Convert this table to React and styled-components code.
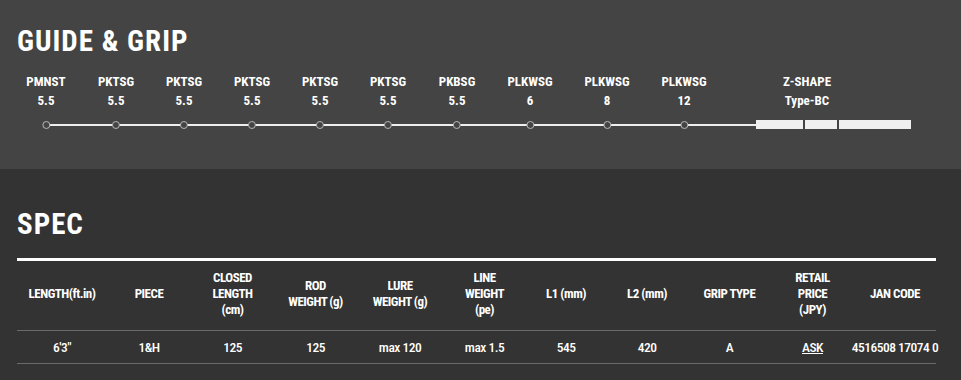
import styled, { createGlobalStyle } from 'styled-components';

const guides = [
  { name: 'PMNST', size: '5.5', x: 46 },
  { name: 'PKTSG', size: '5.5', x: 116 },
  { name: 'PKTSG', size: '5.5', x: 184 },
  { name: 'PKTSG', size: '5.5', x: 252 },
  { name: 'PKTSG', size: '5.5', x: 320 },
  { name: 'PKTSG', size: '5.5', x: 388 },
  { name: 'PKBSG', size: '5.5', x: 457 },
  { name: 'PLKWSG', size: '6', x: 530 },
  { name: 'PLKWSG', size: '8', x: 607 },
  { name: 'PLKWSG', size: '12', x: 684 },
];

const columns = [
  { head: ['LENGTH(ft.in)'], value: '6\'3"', width: 90 },
  { head: ['PIECE'], value: '1&H', width: 84 },
  { head: ['CLOSED', 'LENGTH', '(cm)'], value: '125', width: 83 },
  { head: ['ROD', 'WEIGHT (g)'], value: '125', width: 83 },
  { head: ['LURE', 'WEIGHT (g)'], value: 'max 120', width: 86 },
  { head: ['LINE', 'WEIGHT', '(pe)'], value: 'max 1.5', width: 83 },
  { head: ['L1 (mm)'], value: '545', width: 80 },
  { head: ['L2 (mm)'], value: '420', width: 82 },
  { head: ['GRIP TYPE'], value: 'A', width: 83 },
  { head: ['RETAIL', 'PRICE', '(JPY)'], value: 'ASK', width: 83, link: true },
  { head: ['JAN CODE'], value: '4516508 17074 0', width: 82 },
];

export default function App() {
  return (
    <>
      <GlobalStyle />
      <GuideSection>
        <Title>GUIDE &amp; GRIP</Title>
        <Diagram>
          <Rod />
          {guides.map((g, i) => (
            <Guide key={i} style={{ left: g.x }}>
              <GuideName>{g.name}</GuideName>
              <GuideName>{g.size}</GuideName>
              <Ring />
            </Guide>
          ))}
          <Guide style={{ left: 807 }}>
            <GuideName>Z-SHAPE</GuideName>
            <GuideName>Type-BC</GuideName>
          </Guide>
          <Grip>
            <GripPart $w={47} />
            <GripPart $w={32} />
            <GripPart $w={72} />
          </Grip>
        </Diagram>
      </GuideSection>
      <SpecSection>
        <Title>SPEC</Title>
        <Table>
          <HeadRow>
            {columns.map((c, i) => (
              <HeadCell key={i} $w={c.width}>
                {c.head.map((line, j) => <div key={j}>{line}</div>)}
              </HeadCell>
            ))}
          </HeadRow>
          <DataRow>
            {columns.map((c, i) => (
              <DataCell key={i} $w={c.width}>
                {c.link ? <Ask href="#">{c.value}</Ask> : c.value}
              </DataCell>
            ))}
          </DataRow>
        </Table>
      </SpecSection>
    </>
  );
}

const GlobalStyle = createGlobalStyle`
body {
  margin: 0;
  background: #333333;
  font-family: "Roboto", "Liberation Sans Narrow", sans-serif;
  font-stretch: 75%;
  color: #fff;
}
`;

const GuideSection = styled.section`
background: #444444;
height: 169px;
padding: 26px 17px 0;
box-sizing: border-box;
`;

const SpecSection = styled.section`
padding: 40px 25px 0 17px;
`;

const Title = styled.h2`
margin: 0;
font-weight: 700;
font-size: 29px;
line-height: 30px;
letter-spacing: 1px;
`;

const Diagram = styled.div`
position: relative;
height: 60px;
margin: 16px -17px 0;
`;

const Rod = styled.div`
position: absolute;
left: 46px;
width: 710px;
top: 52px;
height: 2px;
background: #eeeeee;
`;

const Guide = styled.div`
position: absolute;
top: 0;
transform: translateX(-50%);
display: flex;
flex-direction: column;
align-items: center;
`;

const GuideName = styled.span`
font-weight: 700;
font-size: 13px;
line-height: 19px;
white-space: nowrap;
`;

const Ring = styled.span`
margin-top: 11px;
width: 6px;
height: 6px;
border-radius: 50%;
border: 1.5px solid #b8b8b8;
background: #444444;
`;

const Grip = styled.div`
position: absolute;
left: 756px;
top: 48px;
display: flex;
gap: 2px;
`;

const GripPart = styled.span`
width: ${p => p.$w}px;
height: 9px;
background: #f0f0f0;
`;

const Table = styled.div`
margin-top: 19px;
width: 919px;
border-top: 3px solid #fff;
`;

const HeadRow = styled.div`
display: flex;
height: 69px;
border-bottom: 1px solid #6a6a6a;
`;

const DataRow = styled.div`
display: flex;
height: 32px;
border-bottom: 1px solid #6a6a6a;
`;

const HeadCell = styled.div`
width: ${p => p.$w}px;
box-sizing: border-box;
padding-bottom: 3px;
display: flex;
flex-direction: column;
justify-content: center;
align-items: center;
text-align: center;
font-weight: 700;
font-size: 13px;
line-height: 16px;
letter-spacing: -0.5px;
`;

const DataCell = styled.div`
width: ${p => p.$w}px;
display: flex;
justify-content: center;
align-items: center;
font-size: 13.5px;
font-weight: 500;
letter-spacing: -0.5px;
white-space: nowrap;
`;

const Ask = styled.a`
color: #fff;
text-decoration: underline;
`;
